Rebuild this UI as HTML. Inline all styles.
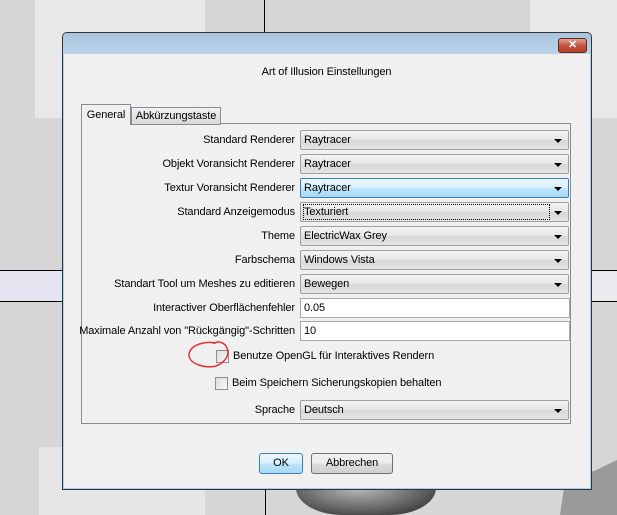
<!DOCTYPE html>
<html><head><meta charset="utf-8"><style>
body{margin:0;width:617px;height:515px;position:relative;overflow:hidden;background:#d6d6d6;font-family:"Liberation Sans",sans-serif;font-size:11px;letter-spacing:-0.1px;color:#000}
.a{position:absolute}
.lbl{position:absolute;right:322px;text-align:right;white-space:nowrap;line-height:20px}
.cb{position:absolute;left:300px;width:269px;border:1px solid #a0a0a0;border-radius:2px;background:linear-gradient(#f4f4f4,#e6e6e6 50%,#d8d8d8 51%,#e4e4e4);line-height:19px;padding-left:3px;box-sizing:border-box;height:20px}
.cb:after{content:"";position:absolute;right:6px;top:8px;border-left:4px solid transparent;border-right:4px solid transparent;border-top:4px solid #000}
.tf{position:absolute;left:300px;width:270px;height:20px;border:1px solid #a8a8a8;background:#fff;box-sizing:border-box;line-height:18px;padding-left:3px}
.chk{position:absolute;width:11px;height:11px;border:1px solid #8e8e8e;background:linear-gradient(135deg,#dcdcdc,#fafafa)}
</style></head><body>
<div class="a" style="left:35px;top:0;width:170px;height:118px;background:#e8e8e8"></div>
<div class="a" style="left:530px;top:0;width:87px;height:118px;background:#e8e8e8"></div>
<div class="a" style="left:264px;top:0;width:1px;height:32px;background:#000"></div>
<div class="a" style="left:0;top:270px;width:63px;height:30px;background:#e4e4f0;border-top:1px solid #000;border-bottom:1px solid #000"></div>
<div class="a" style="left:591px;top:270px;width:26px;height:30px;background:#ebebef;border-top:1px solid #000;border-bottom:1px solid #000"></div>
<div class="a" style="left:39px;top:447px;width:166px;height:68px;background:#e6e6e6"></div>
<div class="a" style="left:265px;top:488px;width:1px;height:27px;background:#000"></div>
<div class="a" style="left:296px;top:488px;width:140px;height:27px;background:radial-gradient(ellipse at 45% 0%,#bbb,#666 55%,#222);border-radius:0 0 70px 70px / 0 0 40px 40px"></div>
<div class="a" style="left:560px;top:460px;width:57px;height:55px;background:#9a9a9a;clip-path:polygon(10% 30%,60% 20%,100% 0,100% 100%,0 100%)"></div>

<div class="a" style="left:62px;top:32px;width:528px;height:456px;border:1px solid #333;border-radius:5px 5px 0 0;background:#f0f0f0;box-shadow:inset 0 0 0 1px #9fd4ee"></div>
<div class="a" style="left:63px;top:33px;width:527px;height:21px;border-radius:4px 4px 0 0;background:linear-gradient(#a9c4e0,#bcd3ea)"></div>
<div class="a" style="left:558px;top:38px;width:27px;height:13px;border:1px solid #6b2a20;border-radius:3px;background:linear-gradient(#e0a090,#c0503a 55%,#b84028);color:#fff;font-weight:bold;font-size:11px;text-align:center;line-height:13px">✕</div>
<div class="a" style="left:63px;top:64px;width:527px;text-align:center;line-height:16px">Art of Illusion Einstellungen</div>

<div class="a" style="left:81px;top:123px;width:488px;height:299px;border:1px solid #898c95;background:#f0f0f0"></div>
<div class="a" style="left:131px;top:107px;width:88px;height:16px;border:1px solid #898c95;background:linear-gradient(#f2f2f2,#d8d8d8);line-height:17px;text-align:center">Abkürzungstaste</div>
<div class="a" style="left:81px;top:104px;width:48px;height:20px;border:1px solid #898c95;border-bottom:none;background:#f0f0f0;line-height:20px;text-align:center">General</div>

<div class="lbl" style="top:130px">Standard Renderer</div><div class="cb" style="top:130px">Raytracer</div>
<div class="lbl" style="top:154px">Objekt Voransicht Renderer</div><div class="cb" style="top:154px">Raytracer</div>
<div class="lbl" style="top:178px">Textur Voransicht Renderer</div><div class="cb" style="top:178px;background:linear-gradient(#eaf6fd,#d9f0fc 50%,#bee6fd 51%,#a7d9f5);border-color:#3c7fb1">Raytracer</div>
<div class="lbl" style="top:202px">Standard Anzeigemodus</div><div class="cb" style="top:202px"><span style="outline:1px dotted #000;display:inline-block;width:245px;line-height:14px">Texturiert</span></div>
<div class="lbl" style="top:226px">Theme</div><div class="cb" style="top:226px">ElectricWax Grey</div>
<div class="lbl" style="top:250px">Farbschema</div><div class="cb" style="top:250px">Windows Vista</div>
<div class="lbl" style="top:274px">Standart Tool um Meshes zu editieren</div><div class="cb" style="top:274px">Bewegen</div>
<div class="lbl" style="top:298px">Interactiver Oberflächenfehler</div><div class="tf" style="top:298px">0.05</div>
<div class="lbl" style="top:321px">Maximale Anzahl von "Rückgängig"-Schritten</div><div class="tf" style="top:321px">10</div>

<div class="chk" style="left:216px;top:350px"></div><div class="a" style="left:233px;top:349px;line-height:15px">Benutze OpenGL für Interaktives Rendern</div>
<svg class="a" style="left:186px;top:340px" width="50" height="32"><path d="M30 3 C20 1 5 4 3 14 C2 24 20 29 30 26 C40 22 45 14 40 6 C36 1 30 1 27 4" fill="none" stroke="#e8303a" stroke-width="1.5"/></svg>
<div class="chk" style="left:215px;top:377px"></div><div class="a" style="left:232px;top:376px;line-height:15px">Beim Speichern Sicherungskopien behalten</div>
<div class="lbl" style="top:400px">Sprache</div><div class="cb" style="top:400px">Deutsch</div>

<div class="a" style="left:259px;top:453px;width:42px;height:19px;border:1px solid #3c7fb1;border-radius:3px;background:linear-gradient(#eaf6fd,#d9f0fc 50%,#bee6fd 51%,#a7d9f5);text-align:center;line-height:19px">OK</div>
<div class="a" style="left:311px;top:453px;width:80px;height:19px;border:1px solid #707070;border-radius:3px;background:linear-gradient(#f2f2f2,#ebebeb 50%,#dddddd 51%,#cfcfcf);text-align:center;line-height:19px">Abbrechen</div>
</body></html>
